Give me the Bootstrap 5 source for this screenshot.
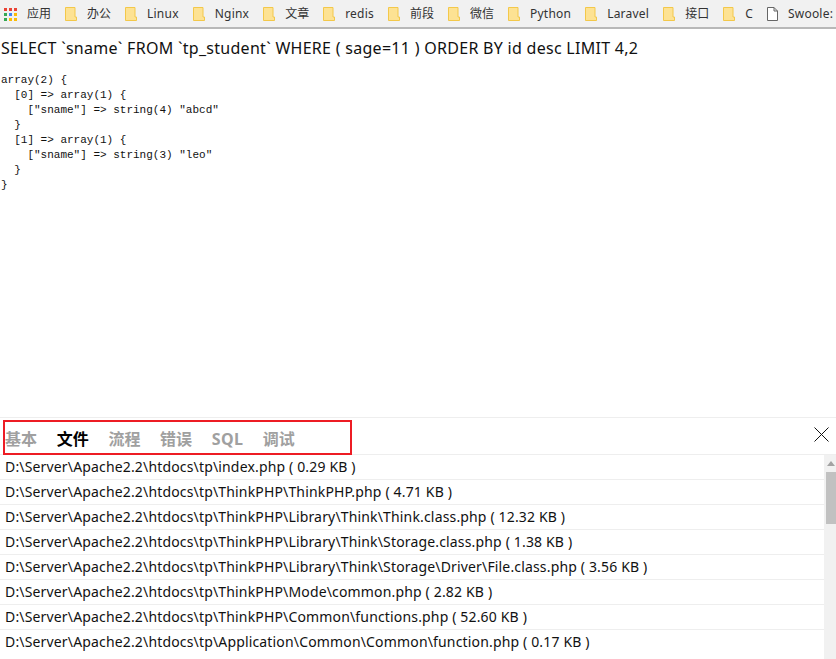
<!doctype html>
<html lang="zh">
<head>
<meta charset="utf-8">
<title>ThinkPHP trace</title>
<link rel="stylesheet" href="https://cdn.jsdelivr.net/npm/bootstrap@5.3.0/dist/css/bootstrap.min.css">
<style>
html,body{height:659px;overflow:hidden}
body{font-family:"Noto Sans","Noto Sans CJK SC",sans-serif;color:#111;background:#fff;display:flex;flex-direction:column}
.bm-bar{height:29px;background:#f1f1f1;border-bottom:2px solid #b8b8b8;padding:1px 0 0 4px;font-size:12px;line-height:16px;color:#333;white-space:nowrap;overflow:hidden;flex:none;letter-spacing:.22px}
.bm-item{display:flex;align-items:center;gap:10px;margin-right:14px;flex:none}
.bm-item svg{flex:none;display:block}
.bm-item .cjk{letter-spacing:0}
.sql-line{font-size:16px;line-height:22px;margin:8px 0 0 1px;white-space:nowrap;letter-spacing:.286px}
.dump{font-family:"Liberation Mono",monospace;font-size:11px;line-height:15px;margin:14px 0 0 1px;color:#111;overflow:visible;flex:1 1 auto}
.trace{flex:none;height:242px;border-top:1px solid #eee;display:flex;flex-direction:column}
.trace-head{height:37px;border-bottom:1px solid #eee;position:relative;flex:none}
.trace-tabs{position:absolute;left:3px;top:2px;width:349px;height:35px;border:2px solid #ed1c24;font-size:16px;font-weight:700;line-height:35px;color:#a0a0a0;gap:19.7px}
.trace-tabs .on{color:#000}
.trace-tabs .latin{letter-spacing:.3px}
.close-x{position:absolute;right:7px;top:9px;display:block}
.trace-body{flex:1 1 auto;min-height:0;overflow:hidden}
.file-rows{flex:1 1 auto;min-width:0}
.file-rows .list-group-item{height:25px;padding:0 0 0 5px;border-width:0 0 1px;border-color:#eee;font-size:14px;line-height:23px;color:#111;white-space:nowrap;background:transparent;letter-spacing:.16px}
.fake-scroll{width:12px;flex:none;background:#f1f1f1;padding-left:2px}
.fake-arrow{height:17px;display:flex;align-items:center;justify-content:center}
.fake-thumb{height:52px;background:#c1c1c1}
</style>
</head>
<body>
<nav class="bm-bar d-flex align-items-center">
  <div class="bm-item">
    <svg width="13" height="13" viewBox="0 0 13 13"><rect x="0" y="0" width="3" height="3" fill="#ea4335"/><rect x="5" y="0" width="3" height="3" fill="#ea4335"/><rect x="10" y="0" width="3" height="3" fill="#ea4335"/><rect x="0" y="5" width="3" height="3" fill="#34a853"/><rect x="5" y="5" width="3" height="3" fill="#4285f4"/><rect x="10" y="5" width="3" height="3" fill="#fbbc05"/><rect x="0" y="10" width="3" height="3" fill="#34a853"/><rect x="5" y="10" width="3" height="3" fill="#fbbc05"/><rect x="10" y="10" width="3" height="3" fill="#fbbc05"/></svg>
    <span class="cjk">应用</span>
  </div>
  <div class="bm-item"><svg width="12" height="14" viewBox="0 0 12 14"><path d="M.5.5h9.5v9.5h1.5v3.5H.5z" fill="#fde293" stroke="#f3c84a"/></svg><span class="cjk">办公</span></div>
  <div class="bm-item"><svg width="12" height="14" viewBox="0 0 12 14"><path d="M.5.5h9.5v9.5h1.5v3.5H.5z" fill="#fde293" stroke="#f3c84a"/></svg><span>Linux</span></div>
  <div class="bm-item"><svg width="12" height="14" viewBox="0 0 12 14"><path d="M.5.5h9.5v9.5h1.5v3.5H.5z" fill="#fde293" stroke="#f3c84a"/></svg><span>Nginx</span></div>
  <div class="bm-item"><svg width="12" height="14" viewBox="0 0 12 14"><path d="M.5.5h9.5v9.5h1.5v3.5H.5z" fill="#fde293" stroke="#f3c84a"/></svg><span class="cjk">文章</span></div>
  <div class="bm-item"><svg width="12" height="14" viewBox="0 0 12 14"><path d="M.5.5h9.5v9.5h1.5v3.5H.5z" fill="#fde293" stroke="#f3c84a"/></svg><span>redis</span></div>
  <div class="bm-item"><svg width="12" height="14" viewBox="0 0 12 14"><path d="M.5.5h9.5v9.5h1.5v3.5H.5z" fill="#fde293" stroke="#f3c84a"/></svg><span class="cjk">前段</span></div>
  <div class="bm-item"><svg width="12" height="14" viewBox="0 0 12 14"><path d="M.5.5h9.5v9.5h1.5v3.5H.5z" fill="#fde293" stroke="#f3c84a"/></svg><span class="cjk">微信</span></div>
  <div class="bm-item"><svg width="12" height="14" viewBox="0 0 12 14"><path d="M.5.5h9.5v9.5h1.5v3.5H.5z" fill="#fde293" stroke="#f3c84a"/></svg><span>Python</span></div>
  <div class="bm-item"><svg width="12" height="14" viewBox="0 0 12 14"><path d="M.5.5h9.5v9.5h1.5v3.5H.5z" fill="#fde293" stroke="#f3c84a"/></svg><span>Laravel</span></div>
  <div class="bm-item"><svg width="12" height="14" viewBox="0 0 12 14"><path d="M.5.5h9.5v9.5h1.5v3.5H.5z" fill="#fde293" stroke="#f3c84a"/></svg><span class="cjk">接口</span></div>
  <div class="bm-item"><svg width="12" height="14" viewBox="0 0 12 14"><path d="M.5.5h9.5v9.5h1.5v3.5H.5z" fill="#fde293" stroke="#f3c84a"/></svg><span>C</span></div>
  <div class="bm-item"><svg width="11" height="14" viewBox="0 0 11 14"><path d="M.5.5h6.5l3.5 3.5v9.5H.5z M7 .5v3.5h3.5" fill="#fff" stroke="#666"/></svg><span>Swoole:</span></div>
</nav>

<div class="sql-line">SELECT `sname` FROM `tp_student` WHERE ( sage=11 ) ORDER BY id desc LIMIT 4,2</div>
<pre class="dump">array(2) {
  [0] =&gt; array(1) {
    ["sname"] =&gt; string(4) "abcd"
  }
  [1] =&gt; array(1) {
    ["sname"] =&gt; string(3) "leo"
  }
}</pre>

<section class="trace">
  <div class="trace-head">
    <div class="trace-tabs d-flex">
      <span>基本</span><span class="on">文件</span><span>流程</span><span>错误</span><span class="latin">SQL</span><span>调试</span>
    </div>
    <svg class="close-x" width="15" height="15" viewBox="0 0 15 15"><path d="M.5.5l14 14M14.5.5l-14 14" stroke="#111" fill="none"/></svg>
  </div>
  <div class="trace-body d-flex">
    <ul class="list-group list-group-flush file-rows rounded-0">
      <li class="list-group-item">D:\Server\Apache2.2\htdocs\tp\index.php ( 0.29 KB )</li>
      <li class="list-group-item">D:\Server\Apache2.2\htdocs\tp\ThinkPHP\ThinkPHP.php ( 4.71 KB )</li>
      <li class="list-group-item">D:\Server\Apache2.2\htdocs\tp\ThinkPHP\Library\Think\Think.class.php ( 12.32 KB )</li>
      <li class="list-group-item">D:\Server\Apache2.2\htdocs\tp\ThinkPHP\Library\Think\Storage.class.php ( 1.38 KB )</li>
      <li class="list-group-item">D:\Server\Apache2.2\htdocs\tp\ThinkPHP\Library\Think\Storage\Driver\File.class.php ( 3.56 KB )</li>
      <li class="list-group-item">D:\Server\Apache2.2\htdocs\tp\ThinkPHP\Mode\common.php ( 2.82 KB )</li>
      <li class="list-group-item">D:\Server\Apache2.2\htdocs\tp\ThinkPHP\Common\functions.php ( 52.60 KB )</li>
      <li class="list-group-item">D:\Server\Apache2.2\htdocs\tp\Application\Common\Common\function.php ( 0.17 KB )</li>
    </ul>
    <div class="fake-scroll">
      <div class="fake-arrow"><svg width="8" height="5" viewBox="0 0 8 5"><path d="M4 0l4 5H0z" fill="#a3a3a3"/></svg></div>
      <div class="fake-thumb"></div>
    </div>
  </div>
</section>
<script src="https://cdn.jsdelivr.net/npm/bootstrap@5.3.0/dist/js/bootstrap.bundle.min.js"></script>
</body>
</html>
